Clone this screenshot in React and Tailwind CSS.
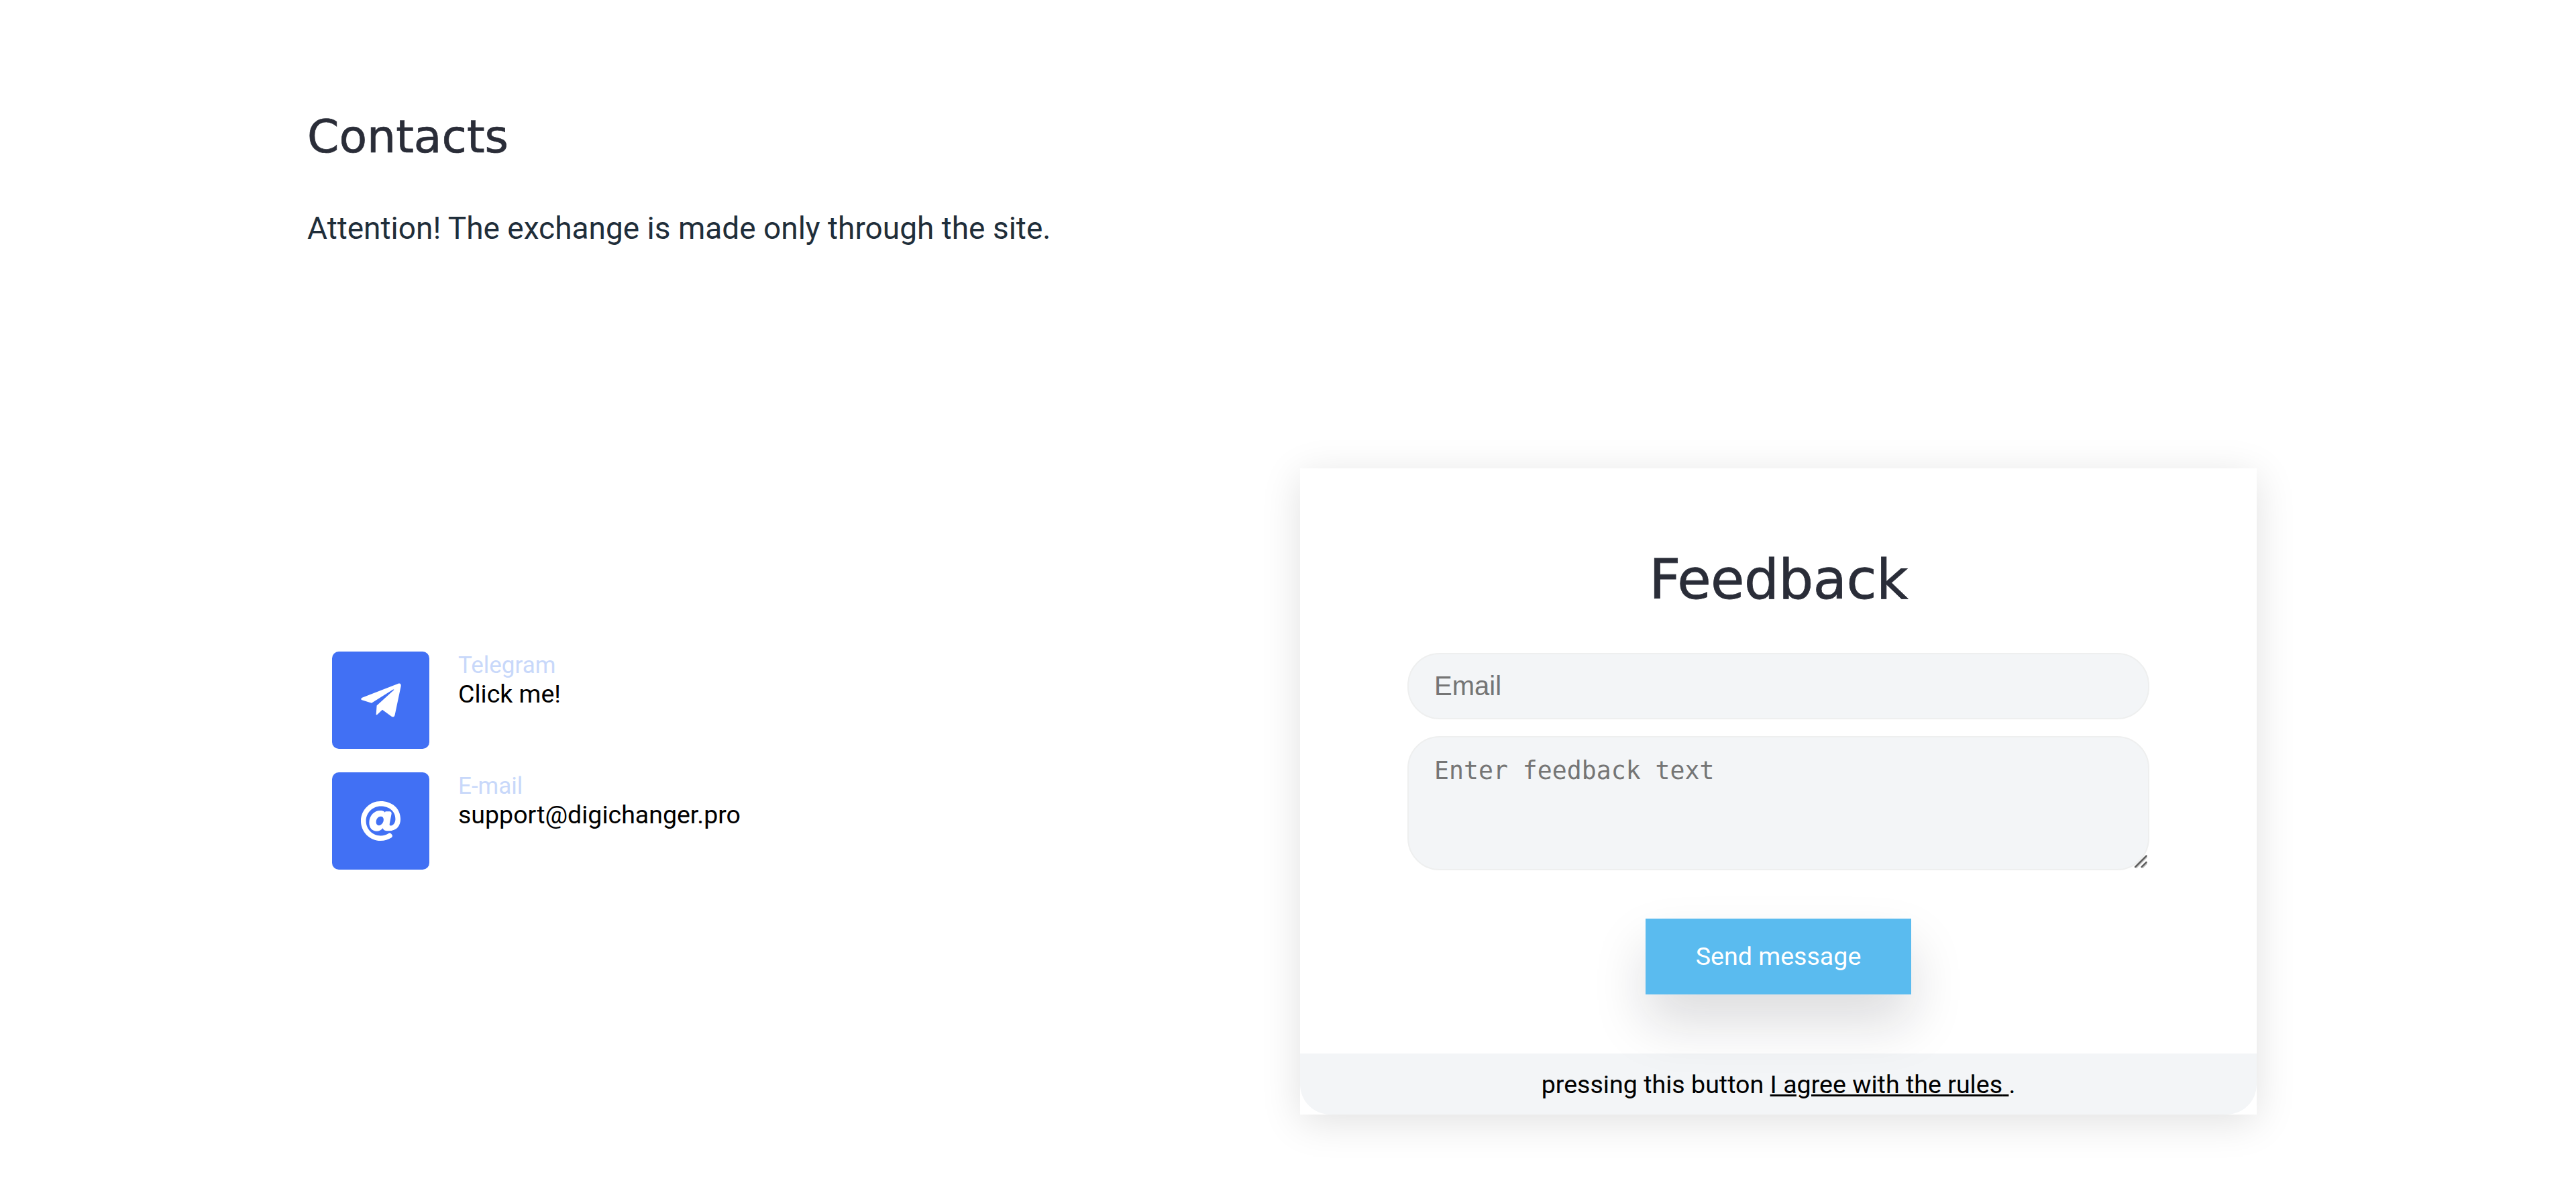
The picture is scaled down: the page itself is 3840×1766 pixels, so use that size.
import { FaAt, FaTelegramPlane } from "react-icons/fa";

const contacts = [
  { label: "Telegram", value: "Click me!", Icon: FaTelegramPlane, size: 68 },
  { label: "E-mail", value: "support@digichanger.pro", Icon: FaAt, size: 61 },
];

function ContactItem({ label, value, Icon, size }) {
  return (
    <li className="flex gap-[43px]">
      <span className="flex size-[145px] items-center justify-center rounded-[10px] bg-[#4170f4] text-white">
        <Icon size={size} />
      </span>
      <div className="-mt-px">
        <p className="text-[35px] leading-[43px] text-[#c8d8fa]">{label}</p>
        <a href="#" className="block text-[37.5px] leading-[42px] text-black">
          {value}
        </a>
      </div>
    </li>
  );
}

function ResizeGrip() {
  return (
    <svg className="pointer-events-none absolute right-[3px] bottom-[3px] size-[20px]" viewBox="0 0 19 19" fill="none">
      <path d="M3 18.5 18.5 3M12 18.5l6.5-6.5" stroke="#c4c4c4" strokeWidth="2" />
      <path d="M2 17 17.5 1.5M11 17l6.5-6.5" stroke="#5c5c5c" strokeWidth="2.4" strokeLinecap="round" />
    </svg>
  );
}

function FeedbackCard() {
  return (
    <section className="w-[1426px] bg-white shadow-[0_11px_57px_rgba(0,0,0,0.12)]">
      <form className="flex flex-col items-center px-40 pt-[118px] pb-[88px]">
        <h2 className="mb-[61px] font-['DejaVu_Sans',sans-serif] text-[82px] leading-[96px] tracking-[-0.6px] text-[#2a2d38] [-webkit-text-stroke:0.8px_#2a2d38]">
          Feedback
        </h2>
        <input
          type="email"
          placeholder="Email"
          className="h-[99px] w-full rounded-[48px] border-2 border-[#eeefef] bg-[#f3f5f7] px-[38px] font-['Liberation_Sans',sans-serif] text-[40px] placeholder:text-[#757575]"
        />
        <div className="relative mt-[25px] h-[200px] w-full">
          <textarea
            placeholder="Enter feedback text"
            className="block size-full resize-none rounded-[48px] border-2 border-[#eeefef] bg-[#f3f5f7] px-[38px] py-[28px] font-['DejaVu_Sans_Mono',monospace] text-[36.5px] leading-[44px] placeholder:text-[#757575]"
          />
          <ResizeGrip />
        </div>
        <button
          type="button"
          className="relative mt-[72px] h-[113px] w-[396px] bg-[#5abbef] text-[37.6px] text-white shadow-[0_42px_80px_rgba(20,20,35,0.15)]"
        >
          Send message
        </button>
      </form>
      <footer className="flex h-[91px] items-center justify-center rounded-b-[45px] bg-[#f3f5f7] text-[37.6px] text-black">
        <p className="pt-px">
          pressing this button{" "}
          <a href="#" className="underline decoration-[3px] underline-offset-[2px]">
            I agree with the rules{" "}
          </a>
          .
        </p>
      </footer>
    </section>
  );
}

export default function App() {
  return (
    <main className="h-[1766px] overflow-hidden bg-white pt-[164px] pr-[476px] pl-[458px] font-[Roboto,sans-serif]">
      <h1 className="font-['DejaVu_Sans',sans-serif] text-[68px] leading-[80px] text-[#2a2d38] [-webkit-text-stroke:0.7px_#2a2d38]">
        Contacts
      </h1>
      <p className="mt-[66px] text-[46px] leading-[60px] text-[#1f2e3a]">
        Attention! The exchange is made only through the site.
      </p>
      <div className="mt-[328px] flex items-start justify-between">
        <ul className="mt-[273px] ml-[37px] flex flex-col gap-[35px]">
          {contacts.map((c) => (
            <ContactItem key={c.label} {...c} />
          ))}
        </ul>
        <FeedbackCard />
      </div>
    </main>
  );
}
